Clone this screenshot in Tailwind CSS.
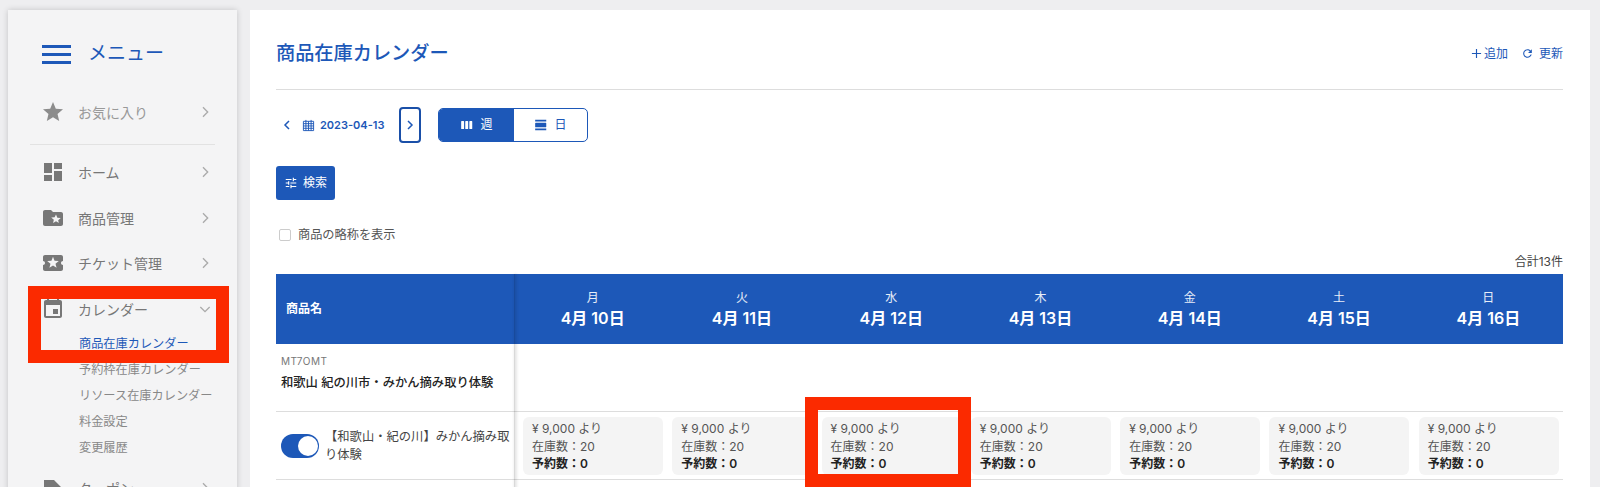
<!DOCTYPE html>
<html lang="ja">
<head>
    <meta charset="UTF-8">
    <title>商品在庫カレンダー</title>
    <script src="https://cdn.jsdelivr.net/npm/@tailwindcss/browser@4"></script>
</head>
<body class="bg-[#eeeef0] h-[487px] overflow-hidden relative font-['Inter','Noto_Sans_CJK_JP',sans-serif]">
    <div class="flex gap-[13px] pl-2 pr-[10px] pt-[10px] h-[487px]">

        <!-- Sidebar -->
        <aside class="w-[229px] shrink-0 h-[520px] bg-[#f4f4f5] shadow-[0_0_6px_rgba(0,0,0,0.18)] text-[#777]">
            <div class="flex items-center h-[88px] pl-[34px]">
                <div class="w-[29px] flex flex-col gap-[5px]">
                    <div class="h-[3px] bg-[#1d58b8]"></div>
                    <div class="h-[3px] bg-[#1d58b8]"></div>
                    <div class="h-[3px] bg-[#1d58b8]"></div>
                </div>
                <span class="ml-[17px] text-[19px] text-[#1d58b8]">メニュー</span>
            </div>
            <a class="flex items-center h-[28px] pl-[33px] pr-[24px] text-[#999]">
                <svg viewBox="0 0 24 24" class="w-[24px] h-[24px] fill-[#8c8c8c]"><path d="M12 17.27L18.18 21l-1.64-7.03L22 9.24l-7.19-.61L12 2 9.19 8.63 2 9.24l5.46 4.73L5.82 21z"/></svg>
                <span class="ml-[13px] text-[14px] flex-1">お気に入り</span>
                <svg viewBox="0 0 24 24" class="w-[16px] h-[16px] fill-none stroke-[#aaa] stroke-2"><path d="M9 5l7 7-7 7"/></svg>
            </a>
            <div class="mx-[22px] mt-[18px] mb-[13px] h-px bg-[#e2e2e2]"></div>

            <a class="flex items-center h-[28px] pl-[33px] pr-[24px]">
                <svg viewBox="0 0 24 24" class="w-[24px] h-[24px] fill-[#777]"><path d="M3 13h8V3H3v10zm0 8h8v-6H3v6zm10 0h8V11h-8v10zm0-18v6h8V3h-8z"/></svg>
                <span class="ml-[13px] text-[14px] flex-1">ホーム</span>
                <svg viewBox="0 0 24 24" class="w-[16px] h-[16px] fill-none stroke-[#aaa] stroke-2"><path d="M9 5l7 7-7 7"/></svg>
            </a>
            <a class="flex items-center h-[28px] mt-[18px] pl-[33px] pr-[24px]">
                <svg viewBox="0 0 24 24" class="w-[24px] h-[24px] fill-[#777]"><path d="M20 6h-8l-2-2H4c-1.1 0-1.99.9-1.99 2L2 18c0 1.1.9 2 2 2h16c1.1 0 2-.9 2-2V8c0-1.1-.9-2-2-2zm-2.06 11L15 15.28 12.06 17l.78-3.33-2.59-2.24 3.41-.29L15 8.5l1.34 3.14 3.41.29-2.59 2.24.78 3.33z"/></svg>
                <span class="ml-[13px] text-[14px] flex-1">商品管理</span>
                <svg viewBox="0 0 24 24" class="w-[16px] h-[16px] fill-none stroke-[#aaa] stroke-2"><path d="M9 5l7 7-7 7"/></svg>
            </a>
            <a class="flex items-center h-[28px] mt-[17px] pl-[33px] pr-[24px]">
                <svg viewBox="0 0 24 24" class="w-[24px] h-[24px] fill-[#777]"><path d="M20 12c0-1.1.9-2 2-2V6c0-1.1-.9-2-2-2H4c-1.1 0-1.99.9-1.99 2v4c1.1 0 1.99.9 1.99 2s-.89 2-2 2v4c0 1.1.9 2 2 2h16c1.1 0 2-.9 2-2v-4c-1.1 0-2-.9-2-2zm-4.42 4.8L12 14.5l-3.58 2.3 1.08-4.12-3.29-2.69 4.24-.25L12 5.8l1.54 3.95 4.24.25-3.29 2.69 1.09 4.11z"/></svg>
                <span class="ml-[13px] text-[14px] flex-1">チケット管理</span>
                <svg viewBox="0 0 24 24" class="w-[16px] h-[16px] fill-none stroke-[#aaa] stroke-2"><path d="M9 5l7 7-7 7"/></svg>
            </a>
            <a class="flex items-center h-[28px] mt-[18px] pl-[33px] pr-[24px]">
                <svg viewBox="0 0 24 24" class="w-[24px] h-[24px] fill-[#777]"><path d="M17 12h-5v5h5v-5zM16 1v2H8V1H6v2H5c-1.11 0-1.99.9-1.99 2L3 19c0 1.1.89 2 2 2h14c1.1 0 2-.9 2-2V5c0-1.1-.9-2-2-2h-1V1h-2zm3 18H5V8h14v11z"/></svg>
                <span class="ml-[13px] text-[14px] flex-1">カレンダー</span>
                <svg viewBox="0 0 24 24" class="w-[16px] h-[16px] fill-none stroke-[#aaa] stroke-2"><path d="M5 9l7 7 7-7"/></svg>
            </a>
            <!-- Calendar submenu -->
            <ul class="mt-[8px] pl-[71px] text-[12.2px] leading-[26px] text-[#888]">
                <li class="text-[#1d58b8]">商品在庫カレンダー</li>
                <li>予約枠在庫カレンダー</li>
                <li>リソース在庫カレンダー</li>
                <li>料金設定</li>
                <li>変更履歴</li>
            </ul>
            <a class="flex items-center h-[28px] mt-[13px] pl-[33px] pr-[24px]">
                <svg viewBox="0 0 24 24" class="w-[24px] h-[24px] fill-[#777]"><path d="M3 4h10l9 9-8 8-9-9H3V4z"/></svg>
                <span class="ml-[13px] text-[14px] flex-1">クーポン</span>
                <svg viewBox="0 0 24 24" class="w-[16px] h-[16px] fill-none stroke-[#aaa] stroke-2"><path d="M9 5l7 7-7 7"/></svg>
            </a>
        </aside>

        <!-- Main -->
        <main class="flex-1 bg-white pl-[26px] pr-[27px] h-[520px]">
            <div class="flex items-center justify-between h-[80px] border-b border-[#ddd]">
                <h1 class="text-[19.2px] font-medium text-[#1d58b8] mt-[8px]">商品在庫カレンダー</h1>
                <div class="flex items-center text-[12px] text-[#1d58b8] mt-[8px]">
                    <svg viewBox="0 0 24 24" class="w-[11px] h-[11px] fill-none stroke-[#1d58b8] stroke-[2.5]"><path d="M12 2v20M2 12h20"/></svg>
                    <span class="ml-[2px]">追加</span>
                    <svg viewBox="0 0 24 24" class="ml-[13px] w-[13px] h-[13px] fill-[#1d58b8]"><path d="M17.65 6.35C16.2 4.9 14.21 4 12 4c-4.42 0-7.99 3.58-7.99 8s3.57 8 7.99 8c3.73 0 6.84-2.55 7.73-6h-2.08c-.82 2.33-3.04 4-5.65 4-3.31 0-6-2.69-6-6s2.69-6 6-6c1.66 0 3.14.69 4.22 1.78L13 11h7V4l-2.35 2.35z"/></svg>
                    <span class="ml-[5px]">更新</span>
                </div>
            </div>

            <!-- Date nav -->
            <div class="flex items-center mt-[17px] h-[36px]">
                <svg viewBox="0 0 24 24" class="ml-[5px] w-[12px] h-[12px] fill-none stroke-[#1d58b8] stroke-[3]"><path d="M16 4l-8 8 8 8"/></svg>
                <svg viewBox="0 0 14 14" class="ml-[9px] w-[13px] h-[13px] fill-none stroke-[#1d58b8]"><path d="M1.5 2.5h11v10h-11zM1.5 5h11M1.5 7.5h11M1.5 10h11M4.2 1v11.5M7 2.5v10M9.8 1v11.5"/></svg>
                <span class="ml-[5px] text-[11px] font-semibold text-[#1d58b8] w-[64px] whitespace-nowrap">2023-04-13</span>
                <button class="ml-[15px] w-[22px] h-[36px] border-2 border-[#1a4fa8] rounded-[4px] flex items-center justify-center">
                    <svg viewBox="0 0 24 24" class="w-[12px] h-[12px] fill-none stroke-[#1d58b8] stroke-[3]"><path d="M8 4l8 8-8 8"/></svg>
                </button>
                <div class="ml-[17px] flex w-[150px] h-[34px] border border-[#1d58b8] rounded-[5px] overflow-hidden text-[12px]">
                    <div class="w-[75px] bg-[#1d58b8] text-white flex items-center justify-center gap-[6px]">
                        <svg viewBox="0 0 24 24" class="w-[14px] h-[14px] fill-white"><path d="M6 5H3c-.55 0-1 .45-1 1v12c0 .55.45 1 1 1h3c.55 0 1-.45 1-1V6c0-.55-.45-1-1-1zm14 0h-3c-.55 0-1 .45-1 1v12c0 .55.45 1 1 1h3c.55 0 1-.45 1-1V6c0-.55-.45-1-1-1zm-7 0h-3c-.55 0-1 .45-1 1v12c0 .55.45 1 1 1h3c.55 0 1-.45 1-1V6c0-.55-.45-1-1-1z"/></svg>
                        週
                    </div>
                    <div class="flex-1 text-[#1d58b8] flex items-center justify-center gap-[6px]">
                        <svg viewBox="0 0 24 24" class="w-[14px] h-[14px] fill-[#1d58b8]"><path d="M2 21h19v-3H2v3zM20 8H3c-.55 0-1 .45-1 1v6c0 .55.45 1 1 1h17c.55 0 1-.45 1-1V9c0-.55-.45-1-1-1zM2 3v3h19V3H2z"/></svg>
                        日
                    </div>
                </div>
            </div>

            <button class="mt-[23px] flex items-center justify-center gap-[5px] w-[59px] h-[34px] bg-[#1d58b8] rounded-[3px] text-white text-[12px]">
                <svg viewBox="0 0 24 24" class="w-[14px] h-[14px] fill-white"><path d="M3 17v2h6v-2H3zM3 5v2h10V5H3zm10 16v-2h8v-2h-8v-2h-2v6h2zM7 9v2H3v2h4v2h2V9H7zm14 4v-2H11v2h10zm-6-4h2V7h4V5h-4V3h-2v6z"/></svg>
                検索
            </button>

            <label class="flex items-center mt-[27px] ml-[3px] h-[16px] text-[12.2px] text-[#555]">
                <span class="w-[12px] h-[12px] border border-[#ccc] rounded-[2px] bg-white"></span>
                <span class="ml-[7px]">商品の略称を表示</span>
            </label>

            <p class="text-right text-[12px] leading-[18px] text-[#444] mt-[10px] mb-[3px]">合計13件</p>

            <!-- Calendar table -->
            <div class="relative">
                <table class="w-full table-fixed border-separate border-spacing-0">
                    <thead>
                        <tr id="headRow" class="h-[70px] bg-[#1d58b8] text-white">
                            <th class="w-[242px] pl-[10px] text-left text-[12px] font-bold">商品名</th>
                        </tr>
                    </thead>
                    <tbody>
                        <tr id="groupRow" class="h-[68px]">
                            <td class="pl-[5px] align-top border-b border-[#ddd]">
                                <p class="mt-[10px] text-[10px] leading-[14px] tracking-[0.5px] text-[#777]">MT7OMT</p>
                                <p class="mt-[6px] text-[12.3px] leading-[18px] font-medium text-[#222]">和歌山 紀の川市・みかん摘み取り体験</p>
                            </td>
                        </tr>
                        <tr id="itemRow" class="h-[68px]">
                            <td class="border-b border-[#ddd]">
                                <div class="flex items-center pl-[5px]">
                                    <div class="w-[38px] h-[24px] shrink-0 rounded-full bg-[#1d58b8] flex items-center justify-end pr-[1px]">
                                        <div class="w-[20px] h-[20px] rounded-full bg-white"></div>
                                    </div>
                                    <p class="ml-[6px] w-[186px] text-[12.3px] leading-[18px] text-[#444]">【和歌山・紀の川】みかん摘み取り体験</p>
                                </div>
                            </td>
                        </tr>
                    </tbody>
                </table>
                <!-- Frozen column edge -->
                <div class="absolute left-[238px] top-0 w-px h-[300px] bg-black/15 shadow-[1px_0_3px_rgba(0,0,0,0.3)]"></div>
            </div>
        </main>
    </div>

    <!-- Red annotation boxes drawn over the screenshot -->
    <div class="absolute left-[28px] top-[286px] w-[201px] h-[77px] border-[13px] border-[#fb2a00]"></div>
    <div class="absolute left-[805px] top-[397px] w-[166px] h-[90px] border-[13px] border-[#fb2a00]"></div>

    <script>
        const days = [["月", "4月 10日"], ["火", "4月 11日"], ["水", "4月 12日"], ["木", "4月 13日"], ["金", "4月 14日"], ["土", "4月 15日"], ["日", "4月 16日"]];

        days.forEach(([dow, date]) => {
            const th = document.createElement("th");
            th.className = "text-center font-normal";
            th.innerHTML = `
                <div class="text-[12px] leading-[18px] text-white/90">${dow}</div>
                <div class="text-[16px] leading-[22px] font-semibold">${date}</div>
            `;
            document.getElementById("headRow").appendChild(th);

            const blank = document.createElement("td");
            blank.className = "border-b border-[#ddd]";
            document.getElementById("groupRow").appendChild(blank);

            const td = document.createElement("td");
            td.className = "px-[5px] pt-[5px] pb-[4px] border-b border-[#ddd]";
            td.innerHTML = `
                <div class="h-[58px] w-[140px] bg-[#f4f4f4] rounded-[6px] pl-[9px] pt-[3px] text-[12px] leading-[17.5px] text-[#555]">
                    <div>¥ 9,000 より</div>
                    <div>在庫数：20</div>
                    <div class="font-semibold text-[#222]">予約数：0</div>
                </div>
            `;
            document.getElementById("itemRow").appendChild(td);
        });
    </script>
</body>
</html>
